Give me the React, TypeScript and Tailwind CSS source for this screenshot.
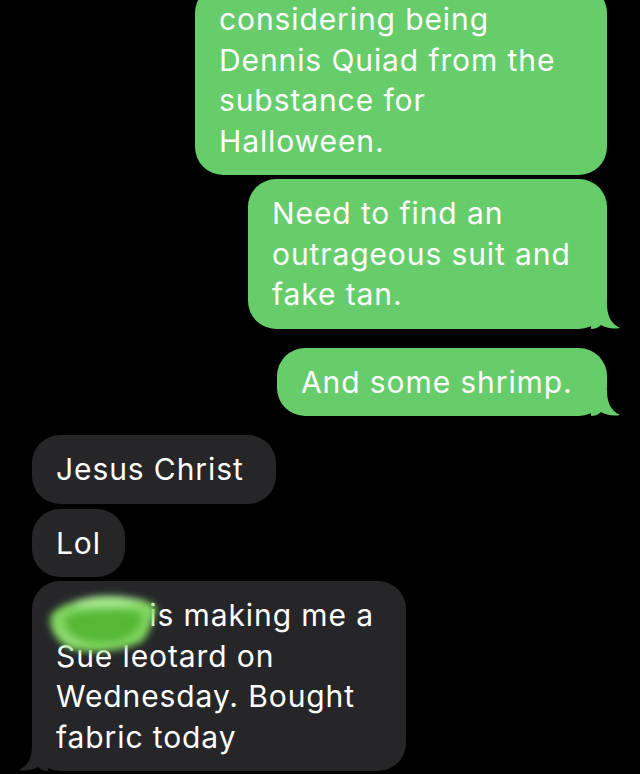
import React from "react";

const GREEN = "bg-[#66cd6a]";
const GRAY = "bg-[#262629]";

function Tail({ color, side }: { color: string; side: "left" | "right" }) {
  return (
    <svg
      width="30"
      height="26"
      viewBox="0 0 30 26"
      className={
        side === "right"
          ? "absolute right-[-14px] bottom-0"
          : "absolute left-[-14px] bottom-0 scale-x-[-1]"
      }
    >
      <path
        d="M0 0 H16 C16 12 19 20 29 25 C22 26.5 15 25 10 22 C7 25 3 26 0 26 Z"
        fill={color}
      />
    </svg>
  );
}

function Sent({
  lines,
  width,
  tail,
  className = "",
}: {
  lines: string[];
  width: string;
  tail?: boolean;
  className?: string;
}) {
  return (
    <div className={`relative self-end mr-[33px] ${width} ${className}`}>
      <div className={`${GREEN} rounded-[28px] pl-[24px] pr-3 py-[14px]`}>
        {lines.map((l, i) => (
          <div key={i} className="whitespace-nowrap">
            {l}
          </div>
        ))}
      </div>
      {tail && <Tail color="#66cd6a" side="right" />}
    </div>
  );
}

function Received({
  children,
  width,
  tail,
  className = "",
}: {
  children: React.ReactNode;
  width: string;
  tail?: boolean;
  className?: string;
}) {
  return (
    <div className={`relative self-start ml-[32px] ${width} ${className}`}>
      <div className={`${GRAY} rounded-[28px] pl-[24px] pr-3 py-[14px]`}>
        {children}
      </div>
      {tail && <Tail color="#262629" side="left" />}
    </div>
  );
}

function Scribble() {
  return (
    <svg
      width="130"
      height="80"
      viewBox="0 0 130 80"
      className="absolute left-0 top-0"
    >
      <defs>
        <filter id="b" x="-20%" y="-30%" width="140%" height="160%">
          <feGaussianBlur stdDeviation="3.5" />
        </filter>
      </defs>
      <g filter="url(#b)">
        <path
          d="M10 28 C22 14 50 8 78 12 C96 10 112 14 116 22 C112 30 110 44 102 54 C84 64 50 68 30 62 C16 56 6 40 10 28 Z"
          fill="#7fd55f"
        />
        <path
          d="M24 30 C44 20 78 20 100 26 C104 36 96 48 78 54 C56 58 36 54 26 44 Z"
          fill="#56b935"
        />
        <path d="M34 14 C56 6 84 8 104 14 C96 20 62 22 36 20 Z" fill="#a3e68c" />
        <path d="M14 40 C20 46 30 52 44 58 C30 60 18 52 14 40 Z" fill="#98e07c" />
      </g>
    </svg>
  );
}

export default function App() {
  return (
    <div
      className="w-[640px] h-[774px] overflow-hidden bg-black text-white text-[30px] leading-[40.5px] tracking-[0.9px]"
      style={{ fontFamily: "Inter, 'Noto Sans', sans-serif" }}
    >
      <div className="flex flex-col">
        <Sent
          className="mt-[-15px]"
          width="w-[412px]"
          lines={[
            "considering being",
            "Dennis Quiad from the",
            "substance for",
            "Halloween.",
          ]}
        />
        <Sent
          className="mt-[4px]"
          width="w-[359px]"
          tail
          lines={["Need to find an", "outrageous suit and", "fake tan."]}
        />
        <Sent
          className="mt-[19px]"
          width="w-[330px]"
          tail
          lines={["And some shrimp."]}
        />
        <Received className="mt-[19px]" width="w-[244px]">
          Jesus Christ
        </Received>
        <Received className="mt-[5px]" width="w-[93px]">
          Lol
        </Received>
        <Received className="mt-[4px]" width="w-[374px]" tail>
          <div className="relative">
            <div className="whitespace-nowrap">
              <span className="inline-block w-[84px]" />
              {" is making me a"}
            </div>
            <div>Sue leotard on</div>
            <div>Wednesday. Bought</div>
            <div>fabric today</div>
            <div className="absolute left-[-15px] top-[-8px]">
              <Scribble />
            </div>
          </div>
        </Received>
      </div>
    </div>
  );
}
